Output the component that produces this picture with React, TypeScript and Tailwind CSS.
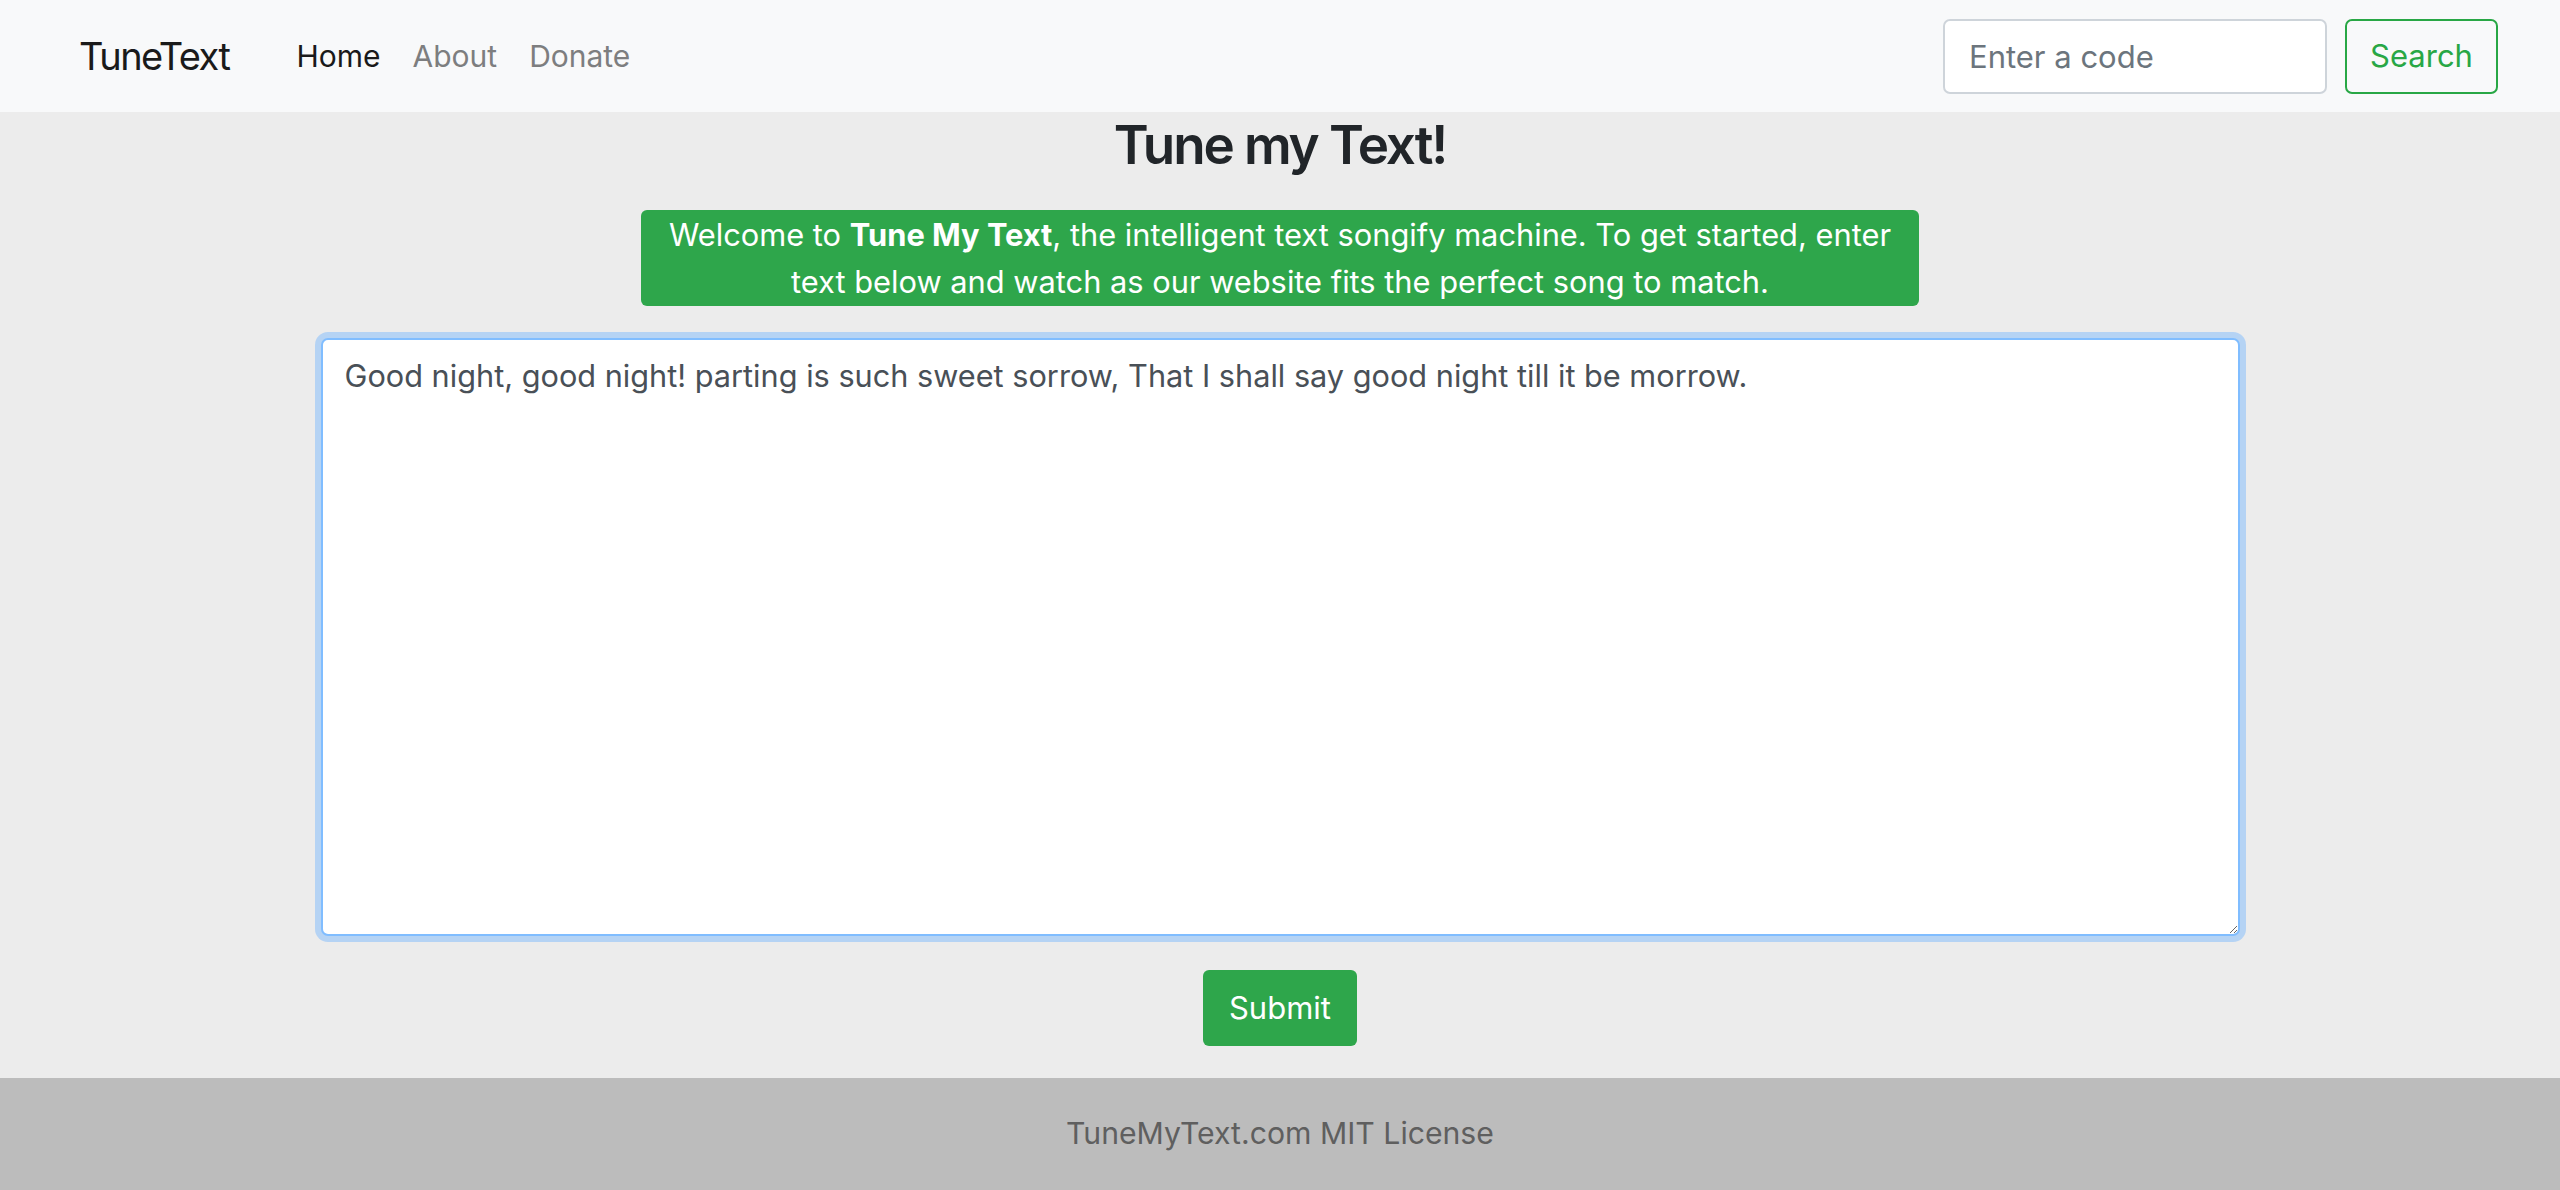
import { useState } from "react";

const QUOTE =
  "Good night, good night! parting is such sweet sorrow, That I shall say good night till it be morrow.";

export default function App() {
  const [text, setText] = useState(QUOTE);
  const [code, setCode] = useState("");

  return (
    <div className="min-h-screen flex flex-col bg-[#ececec] font-['Inter',sans-serif]">
      <nav className="h-[112px] shrink-0 bg-[#f8f9fa] flex items-center pl-[79px] pr-[62px]">
        <a href="#" className="text-[38px] leading-[1.5] tracking-[-0.04em] text-[#1a1a1a]">
          TuneText
        </a>
        <ul className="flex ml-[51px]">
          <li>
            <a href="#" className="block px-[16px] text-[30px] leading-[1.5] text-[#1a1a1a]">
              Home
            </a>
          </li>
          <li>
            <a href="#" className="block px-[16px] text-[30px] leading-[1.5] text-[#7d7e7f]">
              About
            </a>
          </li>
          <li>
            <a href="#" className="block px-[16px] text-[30px] leading-[1.5] text-[#7d7e7f]">
              Donate
            </a>
          </li>
        </ul>
        <form
          className="ml-auto flex gap-[18px]"
          onSubmit={(e) => e.preventDefault()}
        >
          <input
            type="text"
            value={code}
            onChange={(e) => setCode(e.target.value)}
            placeholder="Enter a code"
            className="w-[384px] h-[75px] px-[24px] bg-white border-2 border-[#ced4da] rounded-[7px]
                       text-[31px] text-[#495057] placeholder:text-[#6c757d] outline-none"
          />
          <button
            type="submit"
            className="w-[153px] h-[75px] border-2 border-[#28a745] rounded-[7px] text-[31px] text-[#28a745]"
          >
            Search
          </button>
        </form>
      </nav>

      <main className="flex-1 flex flex-col items-center">
        <h1 className="text-[53px] leading-[66px] font-semibold tracking-[-0.04em] text-[#212529]">
          Tune my Text!
        </h1>
        <p className="mt-[32px] w-[1278px] py-[1px] px-[10px] bg-[#2ea64b] rounded-[6px] text-center text-white text-[30.8px] leading-[47px]">
          Welcome to <b className="font-bold">Tune My Text</b>, the intelligent text songify machine. To get
          started, enter
          <br />
          text below and watch as our website fits the perfect song to match.
        </p>
        <textarea
          value={text}
          onChange={(e) => setText(e.target.value)}
          className="mt-[32px] w-[1919px] h-[598px] px-[22px] pt-[13px] bg-white border-2 border-[#80bdff]
                     rounded-[7px] shadow-[0_0_0_6px_#b5d3f4] outline-none text-[30.7px] leading-[1.5] text-[#495057]"
        />
        <button
          type="button"
          className="mt-[34px] w-[154px] h-[76px] bg-[#2ea64b] rounded-[6px] text-white text-[31px]"
        >
          Submit
        </button>
      </main>

      <footer className="h-[112px] shrink-0 bg-[#bcbcbc] flex items-center justify-center">
        <span className="text-[30.2px] text-[#5f5f5f]">TuneMyText.com MIT License</span>
      </footer>
    </div>
  );
}
